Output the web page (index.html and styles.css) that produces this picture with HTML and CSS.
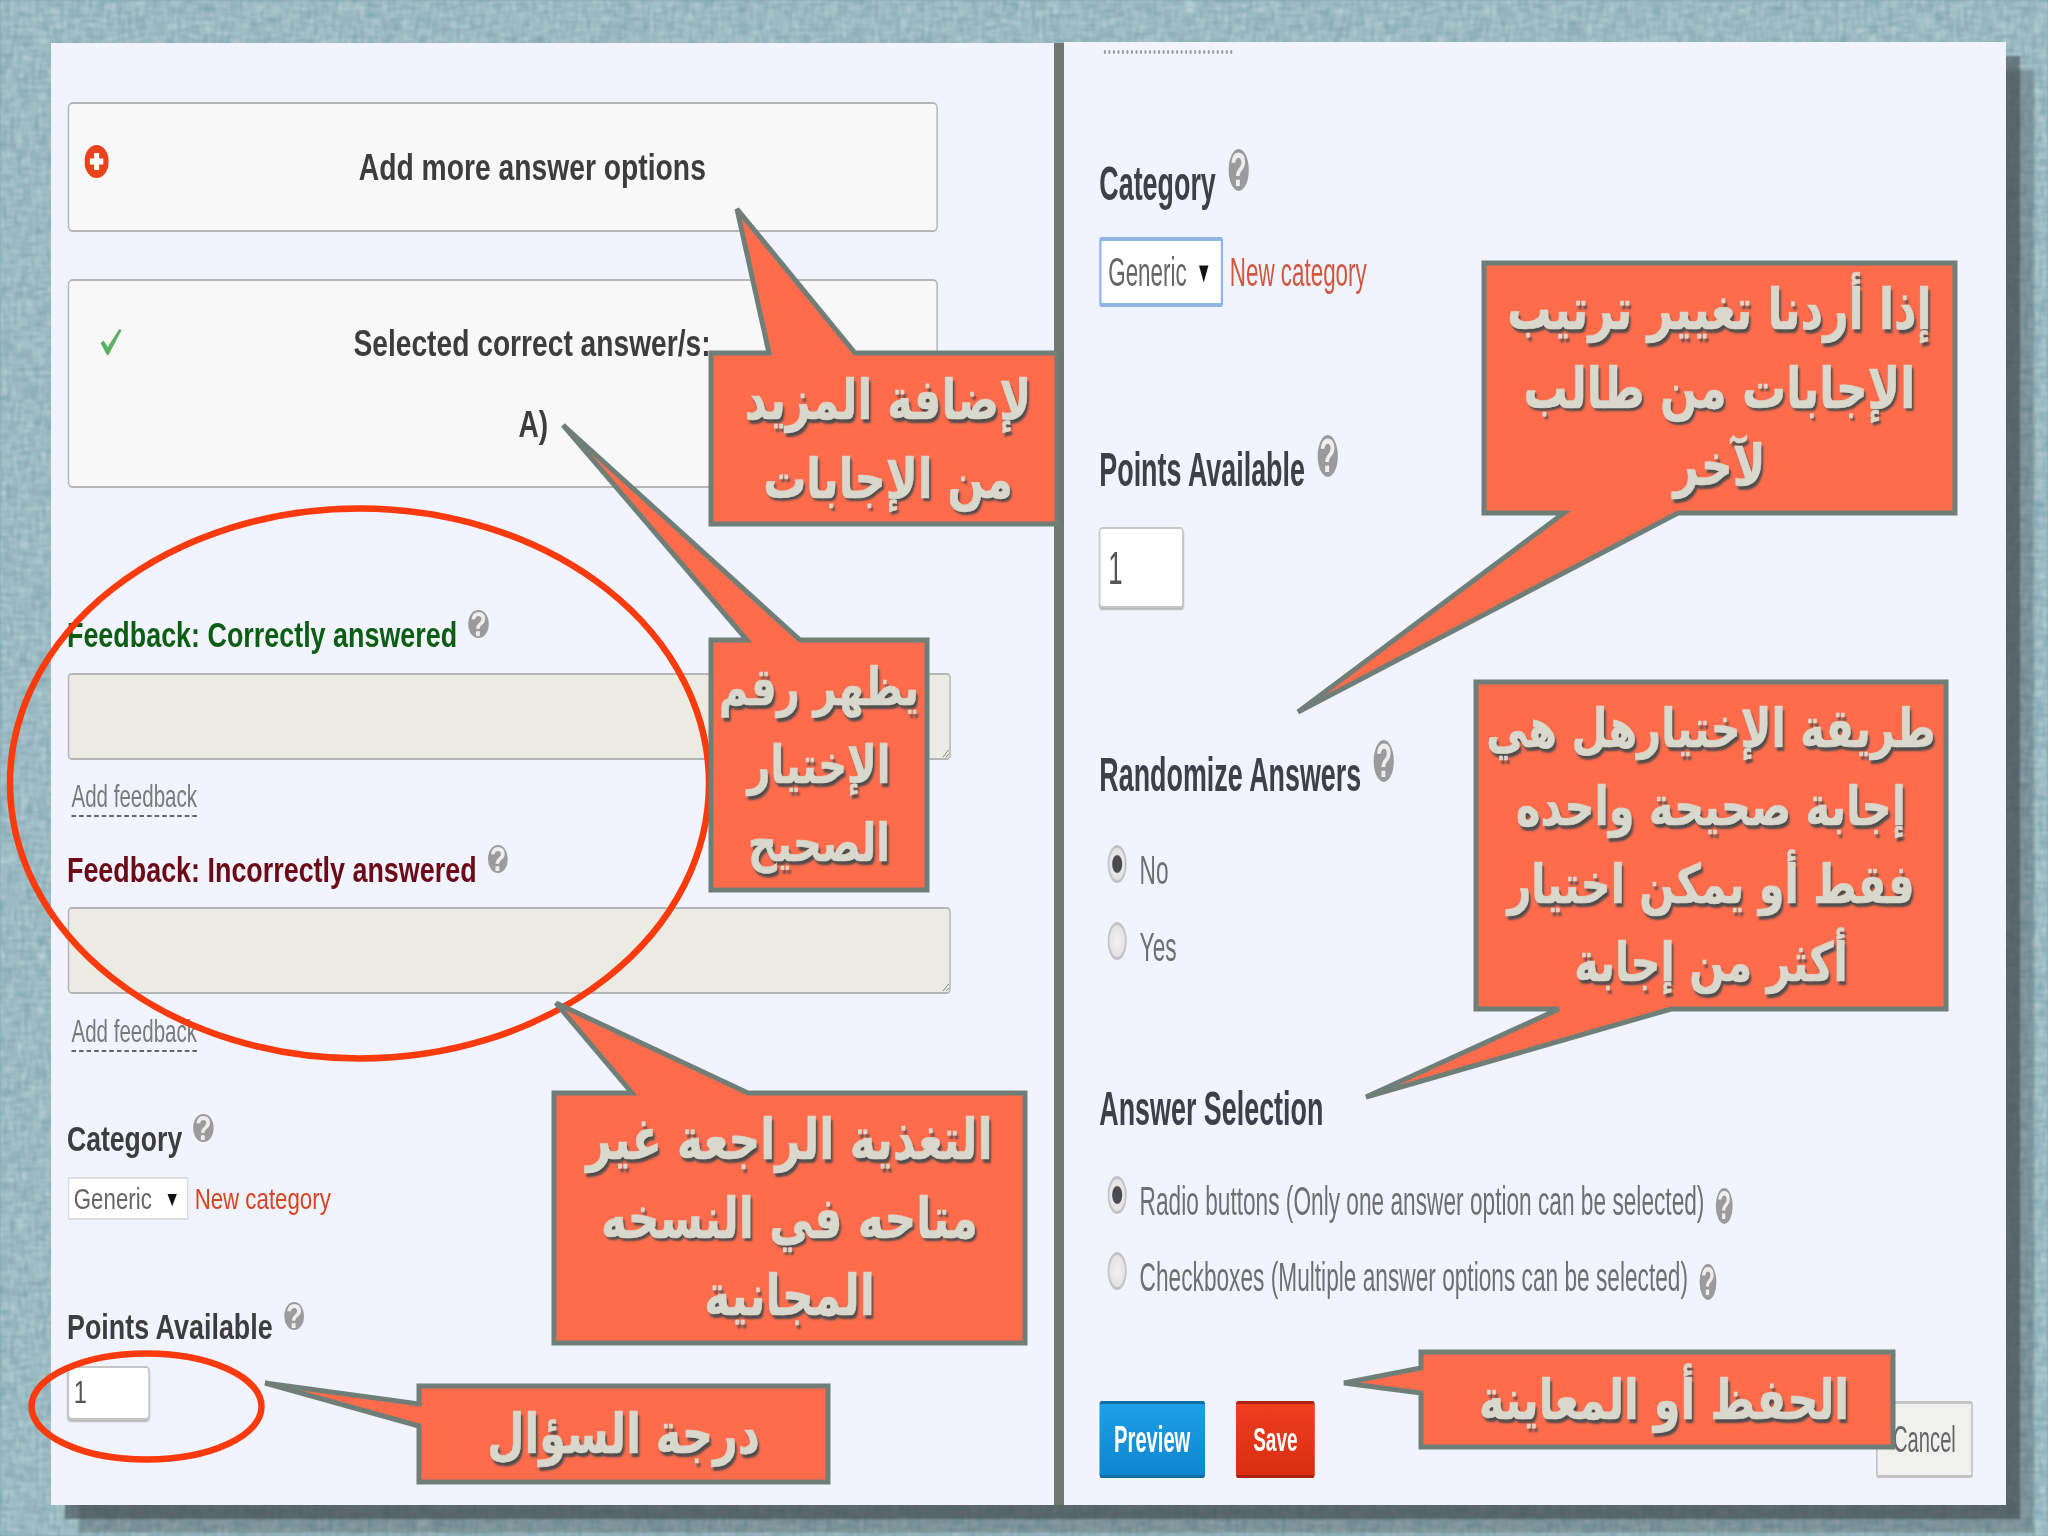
FILE: index.html
```html
<!DOCTYPE html>
<html lang="en">
<head>
<meta charset="utf-8">
<title>Question settings</title>
<link rel="stylesheet" href="styles.css">
</head>
<body>
<svg class="texture" viewBox="0 0 2048 1536" preserveAspectRatio="none" aria-hidden="true">
  <filter id="linen" x="0" y="0" width="100%" height="100%">
    <feTurbulence type="fractalNoise" baseFrequency="0.28 0.06" numOctaves="3" seed="4" result="a"/>
    <feTurbulence type="fractalNoise" baseFrequency="0.06 0.28" numOctaves="3" seed="9" result="b"/>
    <feBlend in="a" in2="b" mode="multiply"/>
    <feColorMatrix type="matrix" values="0 0 0 0 0.88  0 0 0 0 0.95  0 0 0 0 0.96  0.9 0 0 0 -0.1"/>
    <feGaussianBlur stdDeviation="0.9"/>
  </filter>
  <rect width="2048" height="1536" fill="#79a1ac"/>
  <rect width="2048" height="1536" filter="url(#linen)"/>
</svg>

<main class="panels">
  <section class="panel panel-left">
    <div class="inner inner-left">
      <div class="box box-add">
        <svg class="plus" viewBox="0 0 29 33" preserveAspectRatio="none">
          <ellipse cx="14.5" cy="16.5" rx="14.5" ry="16.5" fill="#e9421c"/>
          <path d="M6.5 16.5h16M14.5 8v17" stroke="#fff" stroke-width="6"/>
        </svg>
        <span class="box-title add-title">Add more answer options</span>
      </div>
      <div class="box box-selected">
        <div class="selected-row">
          <svg class="tick" viewBox="0 0 26 26" preserveAspectRatio="none">
            <path d="M0 14 L4 11.5 L9 18 L23 0 L26 1 L10 26 L8 26 Z" fill="#5cb263"/>
          </svg>
          <span class="box-title selected-title">Selected correct answer/s:</span>
        </div>
        <span class="box-title answer-letter">A)</span>
      </div>

      <div class="label label-good first-feedback">Feedback: Correctly answered<span class="help">?</span></div>
      <textarea class="feedback feedback-good" disabled></textarea>
      <div class="add-row add-row-good"><span class="add-link"><span class="add-text">Add feedback</span></span></div>

      <div class="label label-bad second-feedback">Feedback: Incorrectly answered<span class="help">?</span></div>
      <textarea class="feedback feedback-bad" disabled></textarea>
      <div class="add-row add-row-bad"><span class="add-link"><span class="add-text">Add feedback</span></span></div>

      <div class="label category-left">Category<span class="help">?</span></div>
      <div class="select-row">
        <div class="select select-left"><span>Generic</span><span class="arrow">▼</span></div>
        <span class="new-cat">New category</span>
      </div>

      <div class="label points-left">Points Available<span class="help">?</span></div>
      <input class="num num-left" value="1" aria-label="Points">
    </div>
  </section>

  <section class="panel panel-right">
    <div class="inner inner-right">
      <div class="dots"></div>
      <div class="head category-right">Category<span class="help">?</span></div>
      <div class="select-row select-row-right">
        <div class="select select-right"><span>Generic</span><span class="arrow">▼</span></div>
        <span class="new-cat">New category</span>
      </div>

      <div class="head points-right">Points Available<span class="help">?</span></div>
      <input class="num num-right" value="1" aria-label="Points">

      <div class="head randomize">Randomize Answers<span class="help">?</span></div>
      <div class="opt opt-no"><span class="radio on"></span><span>No</span></div>
      <div class="opt opt-yes"><span class="radio"></span><span>Yes</span></div>

      <div class="head selection">Answer Selection</div>
      <div class="opt opt-radio"><span class="radio on"></span><span>Radio buttons (Only one answer option can be selected)<span class="help help-line">?</span></span></div>
      <div class="opt opt-check"><span class="radio"></span><span>Checkboxes (Multiple answer options can be selected)<span class="help help-line">?</span></span></div>

      <div class="actions">
        <span class="btn btn-preview">Preview</span>
        <span class="btn btn-save">Save</span>
        <span class="btn btn-cancel">Cancel</span>
      </div>
    </div>
  </section>
</main>

<svg class="overlay" viewBox="0 0 2048 1536" aria-hidden="true">
  <ellipse class="ring" cx="359.500" cy="783.500" rx="349.500" ry="275"/>
  <ellipse class="ring" cx="146.500" cy="1406.500" rx="115" ry="53"/>
  <polygon class="call" points="711,353 769,353 737,209 855,353 1057,353 1057,524 711,524"/>
  <polygon class="call" points="711,640 747,640 563,425 800,640 927,640 927,890 711,890"/>
  <polygon class="call" points="554,1093 632,1093 556,1003 748,1093 1025,1093 1025,1343 554,1343"/>
  <polygon class="call" points="419,1386 828,1386 828,1482 419,1482 419,1426 265,1383 419,1404"/>
  <polygon class="call" points="1484,263 1955,263 1955,513 1678,513 1298,712 1564,513 1484,513"/>
  <polygon class="call" points="1476,682 1946,682 1946,1009 1671,1009 1366,1097 1559,1009 1476,1009"/>
  <polygon class="call" points="1421,1352 1893,1352 1893,1447 1421,1447 1421,1393 1344,1383 1421,1368"/>
</svg>

<div class="note note-1" lang="ar" dir="rtl"><p>لإضافة المزيد<br>من الإجابات</p></div>
<div class="note note-2" lang="ar" dir="rtl"><p>يظهر رقم<br>الإختيار<br>الصحيح</p></div>
<div class="note note-3" lang="ar" dir="rtl"><p>التغذية الراجعة غير<br>متاحه في النسخه<br>المجانية</p></div>
<div class="note note-4" lang="ar" dir="rtl"><p>درجة السؤال</p></div>
<div class="note note-5" lang="ar" dir="rtl"><p>إذا أردنا تغيير ترتيب<br>الإجابات من طالب<br>لآخر</p></div>
<div class="note note-6" lang="ar" dir="rtl"><p>طريقة الإختيارهل هي<br>إجابة صحيحة واحده<br>فقط أو يمكن اختيار<br>أكثر من إجابة</p></div>
<div class="note note-7" lang="ar" dir="rtl"><p>الحفظ أو المعاينة</p></div>
</body>
</html>
```

FILE: styles.css
```css
* { box-sizing: border-box; }
html, body { margin: 0; height: 1536px; }
body {
  position: relative;
  overflow: hidden;
  background: #7ba0ac;
  font-family: "Liberation Sans", "DejaVu Sans", sans-serif;
  color: #3b3b3b;
}
.texture, .overlay { position: absolute; left: 0; top: 0; width: 2048px; height: 1536px; }
.overlay { pointer-events: none; }

.panels { position: relative; display: flex; padding: 43px 0 0 51px; }
.panel {
  height: 1462px;
  background: #f1f3fe;
  box-shadow: 14px 14px 2px rgba(58, 66, 68, .55), 28px 28px 3px rgba(58, 66, 68, .32);
}
.panel-left { width: 1013px; border-right: 10px solid #707674; }
.panel-right { width: 942px; margin-top: -1px; height: 1463px; }
.inner { transform-origin: 0 0; }
.inner-left { width: 1320px; padding: 59px 0 0 22px; transform: scaleX(.76); filter: blur(.4px); }
.inner-right { width: 1682px; padding: 0 59px 0 63px; transform: scaleX(.56); filter: blur(.7px); }

/* left panel */
.box {
  width: 1145px;
  background: #f8f8f8;
  border: 2px solid #b4b6b8;
  border-radius: 6px;
}
.box-add { height: 130px; display: flex; align-items: flex-start; padding: 41px 0 0 20px; }
.plus { width: 32px; height: 33px; flex: none; }
.box-title { font-weight: 700; color: #3d3d3d; line-height: 40px; }
.add-title { font-size: 37.2px; margin: 2px 0 0 329px; }
.box-selected { height: 209px; margin-top: 47px; padding: 42px 0 0 41px; }
.selected-row { display: flex; align-items: flex-start; }
.tick { width: 28px; height: 26px; flex: none; margin-top: 6px; }
.selected-title { font-size: 37.1px; margin-left: 305px; }
.answer-letter { display: block; font-size: 37px; margin: 42px 0 0 550px; }

.label { height: 40px; margin-left: -1px; line-height: 40px; font-size: 35.4px; font-weight: 700; color: #3d3d3d; }
.help {
  display: inline-block;
  width: .75em;
  height: .8em;
  margin-left: .42em;
  border-radius: 50%;
  background: #9b9b9d;
  color: #eee;
  font-weight: 700;
  line-height: .8em;
  text-align: center;
  vertical-align: .3em;
}
.label-good { color: #0b5d12; }
.label-bad { color: #6c0a16; }
.first-feedback { margin-top: 122px; }
.second-feedback { margin-top: 25px; }
.feedback {
  display: block;
  width: 1162px;
  height: 87px;
  background: #ebebe4;
  border: 2px solid #b4b6b8;
  border-radius: 5px;
}
.feedback-good { margin-top: 23px; }
.feedback-bad { margin-top: 22px; }
.add-row { height: 40px; padding-left: 5px; }
.add-row-good { margin-top: 20px; }
.add-row-bad { margin-top: 21px; }
.add-link { display: inline-block; height: 37px; border-bottom: 2px dashed #666; line-height: 34px; font-size: 27px; color: #7a7a7a; }
.add-text { display: inline-block; transform: scaleY(1.15); }
.category-left { margin-top: 59px; font-size: 35px; }
.select-row { display: flex; align-items: center; margin-top: 23px; }
.select {
  display: flex;
  align-items: center;
  justify-content: space-between;
  background: #fff;
}
.select-left { width: 159px; height: 43px; padding: 0 9px 0 6px; border: 2px solid #dedede; font-size: 29.3px; color: #666; }
.arrow { color: #111; font-size: .72em; }
.new-cat { color: #d8431f; font-size: 29.3px; margin-left: 8px; }
.points-left { margin-top: 82px; }
.num {
  display: block;
  background: #fff;
  border: 2px solid #c6c6c6;
  border-radius: 5px;
  color: #555;
  font-family: inherit;
  box-shadow: 0 2px 2px #b8b8b8;
}
.num-left { width: 108px; height: 54px; margin-top: 24px; padding: 0 0 0 6px; font-size: 31px; }

/* right panel */
.dots { width: 230px; height: 4px; margin: 8px 0 0 8px; border-top: 4px dotted #9a9a9a; }
.head { height: 60px; line-height: 60px; font-size: 48px; font-weight: 700; color: #3d4048; }
.head .help { vertical-align: .3em; height: .875em; line-height: .875em; margin-left: .47em; }
.category-right { margin-top: 95px; }
.select-row-right { margin-top: 28px; }
.select-row-right .new-cat { font-size: 40px; color: #d0573f; margin-left: 12px; }
.select-right {
  width: 221px;
  height: 70px;
  padding: 0 16px 0 12px;
  border: 4px solid #93b4e6;
  border-radius: 4px;
  font-size: 40px;
  color: #666;
}
.points-right { margin-top: 128px; }
.num-right { width: 150px; height: 81px; margin-top: 32px; padding: 0 0 0 14px; font-size: 46px; }
.randomize { margin-top: 132px; }
.opt { display: flex; align-items: center; height: 50px; font-size: 40.5px; color: #6f6f72; }
.radio {
  flex: none;
  width: 34px;
  height: 38px;
  margin: -12px 23px 0 15px;
  border: 3px solid #c4c4c6;
  border-radius: 50%;
  background: radial-gradient(circle, #f2f2f2 0, #dcdcdc 100%);
}
.radio.on { background: radial-gradient(circle, #4a4a52 0, #4a4a52 38%, #e8e8e8 46%, #e0e0e0 100%); }
.opt-no { margin-top: 45px; }
.opt-yes { margin-top: 27px; }
.selection { margin-top: 107px; }
.opt-radio { margin-top: 37px; }
.opt-check { margin-top: 26px; }
.help-line { vertical-align: -.12em; margin-left: .5em; height: .875em; line-height: .875em; }
.actions { display: flex; margin-top: 99px; }
.btn {
  display: flex;
  align-items: center;
  justify-content: center;
  height: 77px;
  border-radius: 4px;
  font-weight: 700;
  color: #fff;
}
.btn-preview { width: 189px; font-size: 36px; background: linear-gradient(#1d9fe6, #0f86cf); border-top: 3px solid #0d6ea8; border-bottom: 3px solid #0d6ea8; }
.btn-save { width: 141px; margin-left: 55px; font-size: 34px; background: linear-gradient(#ef3d1f, #d92e12); border-top: 3px solid #a8240f; border-bottom: 3px solid #a8240f; }
.btn-cancel { width: 173px; margin-left: auto; font-size: 36px; font-weight: 400; color: #666; background: #f0f0ef; border: 3px solid #c4c4c4; }

/* overlay */
.ring { fill: none; stroke: #fb3a0e; stroke-width: 6.5; }
.call { fill: #ff6c4c; stroke: #6f7f78; stroke-width: 5; stroke-linejoin: miter; }
.note {
  position: absolute;
  display: flex;
  align-items: center;
  justify-content: center;
  color: #d8d8cd;
  font-family: "DejaVu Sans", sans-serif;
  font-weight: 700;
  font-size: 43px;
  text-align: center;
  text-shadow: 2px 3px 2px #4d4d4d;
  -webkit-text-stroke: .5px #d8d8cd;
  white-space: nowrap;
}
.note p { margin: 0; line-height: 60px; transform: scaleY(1.3); }
.note-1 { left: 711px; top: 353px; width: 346px; height: 171px; padding-left: 8px; }
.note-2 { left: 711px; top: 640px; width: 216px; height: 250px; font-size: 40px; }
.note-3 { left: 554px; top: 1093px; width: 471px; height: 250px; font-size: 44px; }
.note-4 { left: 419px; top: 1386px; width: 409px; height: 96px; }
.note-5 { left: 1484px; top: 263px; width: 471px; height: 250px; font-size: 44px; }
.note-6 { left: 1476px; top: 682px; width: 470px; height: 327px; font-size: 41.5px; }
.note-7 { left: 1421px; top: 1352px; width: 472px; height: 95px; padding-left: 14px; }
```
